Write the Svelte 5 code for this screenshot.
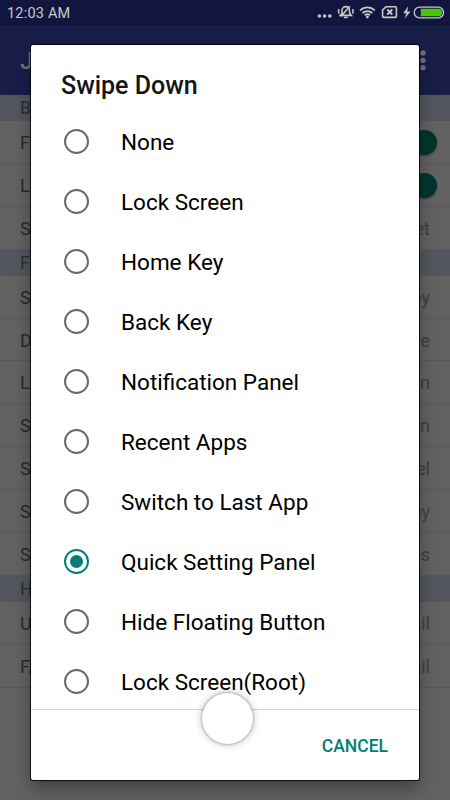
<script lang="ts">
    const title = "Swipe Down";
    const options = [
        "None",
        "Lock Screen",
        "Home Key",
        "Back Key",
        "Notification Panel",
        "Recent Apps",
        "Switch to Last App",
        "Quick Setting Panel",
        "Hide Floating Button",
        "Lock Screen(Root)",
    ];
    let selected = $state("Quick Setting Panel");

    const groups = [
        {
            name: "Basic",
            rows: [
                { label: "Float", on: true },
                { label: "Lock", on: true },
                { label: "Size", value: "Set" },
            ],
        },
        {
            name: "Func",
            rows: [
                { label: "Single", value: "Key" },
                { label: "Double", value: "None" },
                { label: "Long", value: "Button" },
                { label: "Swipe", value: "Screen" },
                { label: "Swipe", value: "Panel" },
                { label: "Swipe", value: "Key" },
                { label: "Swipe", value: "Apps" },
            ],
        },
        {
            name: "Help",
            rows: [
                { label: "Usage", value: "Detail" },
                { label: "FAQ", value: "Detail" },
            ],
        },
    ];
</script>

<div class="screen">
    <div class="status">
        <span class="time">12:03 AM</span>
        <svg width="134" height="25" viewBox="0 0 134 25">
            <g fill="#c9c9c4">
                <circle cx="3.4" cy="16" r="1.8" />
                <circle cx="8.6" cy="16" r="1.8" />
                <circle cx="13.8" cy="16" r="1.8" />
            </g>
            <g fill="none" stroke="#c9c9c4" stroke-width="1.6">
                <path d="M24.2 15.4l1.8-2.2V10.6a3.8 4 0 0 1 7.6 0v2.6l1.8 2.2zM33.8 6.2L25 16.6M23 9.2a5 5 0 0 0 0 4.4M36.6 9.2a5 5 0 0 1 0 4.4" />
                <path d="M27.8 17.4h4" />
                <path d="M44 10.3a11 11 0 0 1 14.8 0M46.5 13a7.4 7.4 0 0 1 9.8 0M48.8 15.3a4 4 0 0 1 5.2 0" stroke-width="1.8" />
                <path d="M70 6.8h9.4a1 1 0 0 1 1 1v8.6a1 1 0 0 1-1 1H67.6a1 1 0 0 1-1-1v-6.2z" />
                <path d="M71.3 9.5l5 5M76.3 9.5l-5 5" stroke-width="1.8" />
                <rect x="98.2" y="7.2" width="29.4" height="10.6" rx="5.3" stroke-width="1.3" />
            </g>
            <path d="M92.2 6.2l-5 7h3.2l-1.8 5.6 6-7.2h-3.4z" fill="#c9c9c4" />
            <circle cx="51.4" cy="17" r="1.4" fill="#c9c9c4" />
            <path d="M104.8 8.7h17.6a3.8 3.8 0 0 1 0 7.6h-17.6z" fill="#49c700" />
        </svg>
    </div>

    <div class="toolbar">
        <span>Joy</span>
        <svg width="6" height="22" viewBox="0 0 6 22" fill="#747474">
            <circle cx="3" cy="2.9" r="2.6" />
            <circle cx="3" cy="10.3" r="2.6" />
            <circle cx="3" cy="17.7" r="2.6" />
        </svg>
    </div>

    {#each groups as group}
        <div class="group">{group.name}</div>
        {#each group.rows as row}
            <div class="row">
                <span>{row.label}</span>
                {#if row.on}
                    <i class="thumb"></i>
                {:else}
                    <span class="value">{row.value}</span>
                {/if}
            </div>
        {/each}
    {/each}

    <div class="dialog">
        <h2>{title}</h2>
        <div class="list">
            {#each options as option}
                <button
                    class="option"
                    class:checked={option === selected}
                    onclick={() => (selected = option)}
                >
                    <i class="radio"></i>
                    {option}
                </button>
            {/each}
        </div>
        <div class="actions">
            <button class="cancel">CANCEL</button>
        </div>
    </div>

    <div class="floating"></div>
</div>

<style>
    :global(body) {
        margin: 0;
    }

    .screen {
        position: relative;
        width: 450px;
        height: 800px;
        overflow: hidden;
        background: #626262;
        font-family: Roboto, sans-serif;
    }

    .status {
        display: flex;
        justify-content: space-between;
        height: 25px;
        padding-left: 7px;
        background: #12163f;
    }

    .status svg {
        display: block;
    }

    .time {
        color: #c9c9c4;
        font-size: 14.5px;
        line-height: 27px;
        letter-spacing: 0.2px;
    }

    .toolbar {
        display: flex;
        align-items: center;
        justify-content: space-between;
        box-sizing: border-box;
        height: 70px;
        padding: 1px 24px 0 20px;
        background: #191e49;
        color: #747474;
        font-size: 24px;
        font-weight: 500;
    }

    .group {
        height: 26px;
        padding-left: 20px;
        background: #53565e;
        color: #2c2c2c;
        font-size: 17.5px;
        line-height: 26px;
    }

    .row {
        display: flex;
        align-items: center;
        justify-content: space-between;
        box-sizing: border-box;
        height: 42.9px;
        padding: 1px 20px 0;
        border-bottom: 1px solid #57585c;
        color: #2a2a2a;
        font-size: 18px;
    }

    .value {
        color: #3f3f3f;
    }

    .thumb {
        width: 25px;
        height: 25px;
        margin-right: -7px;
        border-radius: 50%;
        background: #00352f;
        box-shadow: 0 1px 2px rgba(0, 0, 0, 0.4);
    }

    .dialog {
        position: absolute;
        top: 45px;
        left: 31px;
        display: flex;
        flex-direction: column;
        width: 388px;
        height: 735px;
        border-radius: 2px;
        background: #fff;
        box-shadow:
            0 0 0 1px rgba(0, 0, 0, 0.8),
            0 8px 18px rgba(0, 0, 0, 0.35);
    }

    h2 {
        height: 66px;
        margin: 0;
        padding: 0 30px;
        color: #141414;
        font-size: 25px;
        font-weight: 500;
        line-height: 82px;
    }

    .list {
        flex: 1;
        overflow: hidden;
    }

    button {
        border: 0;
        background: none;
        font-family: inherit;
    }

    .option {
        display: flex;
        align-items: center;
        gap: 32px;
        width: 100%;
        height: 60px;
        padding: 2px 0 0 33px;
        color: #000;
        font-size: 22.5px;
    }

    .radio {
        display: grid;
        place-items: center;
        box-sizing: border-box;
        width: 25px;
        height: 25px;
        margin-top: -1px;
        border: 2px solid #686868;
        border-radius: 50%;
    }

    .checked .radio {
        border-color: #007d75;
    }

    .checked .radio::after {
        content: "";
        width: 13px;
        height: 13px;
        border-radius: 50%;
        background: #007d75;
    }

    .actions {
        display: flex;
        align-items: center;
        justify-content: flex-end;
        height: 70px;
        padding-right: 31px;
        border-top: 1px solid #d3d5d5;
    }

    .cancel {
        padding: 2px 0 0;
        color: #007d75;
        font-size: 17.5px;
        font-weight: 500;
    }

    .floating {
        position: absolute;
        top: 693px;
        left: 202px;
        width: 51px;
        height: 51px;
        border-radius: 50%;
        background: #fff;
        box-shadow:
            0 0 2px 1px rgba(0, 0, 0, 0.22),
            0 0 6px 3px rgba(0, 0, 0, 0.12);
    }
</style>
